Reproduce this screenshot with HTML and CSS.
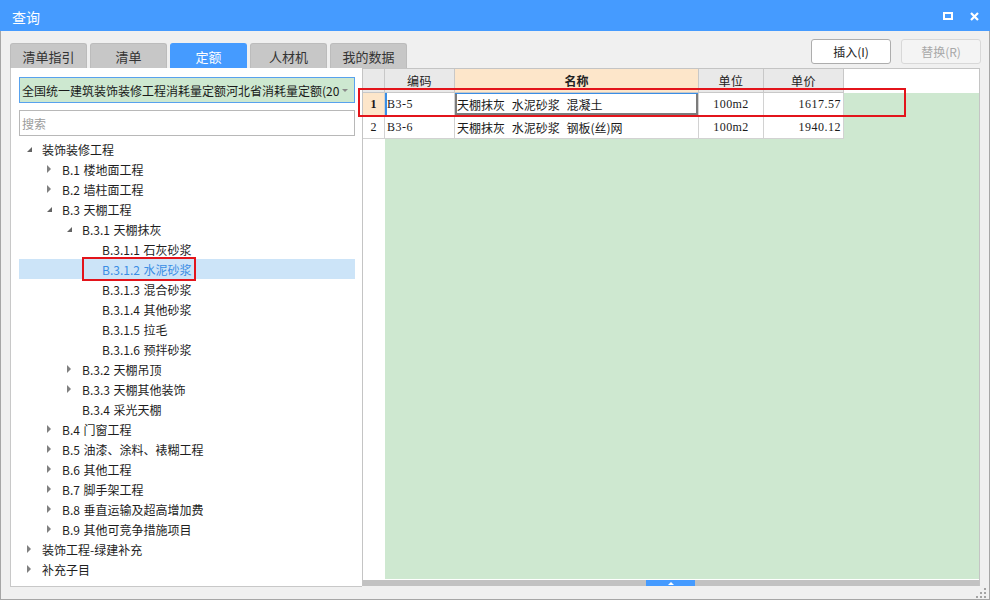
FILE: index.html
```html
<!DOCTYPE html>
<html lang="zh-CN">
<head>
<meta charset="utf-8">
<title>查询</title>
<link rel="stylesheet" href="styles.css">
</head>
<body>
<div class="window">
  <div class="titlebar">
    <span class="title">查询</span>
    <div class="wctrl">
      <svg class="ico-max" width="10" height="8" viewBox="0 0 10 8"><rect x="1" y="1" width="8" height="6" fill="none" stroke="#fff" stroke-width="2"/></svg>
      <svg class="ico-close" width="9" height="9" viewBox="0 0 9 9"><path d="M1 1 L8 8 M8 1 L1 8" stroke="#fff" stroke-width="2.2"/></svg>
    </div>
  </div>
  <div class="body">
    <div class="topbar">
      <div class="tabs">
        <div class="tab">清单指引</div>
        <div class="tab">清单</div>
        <div class="tab active">定额</div>
        <div class="tab">人材机</div>
        <div class="tab">我的数据</div>
      </div>
      <div class="buttons">
        <button class="btn">插入(I)</button>
        <button class="btn disabled">替换(R)</button>
      </div>
    </div>
    <div class="main">
      <div class="left">
        <div class="combo">
          <span class="combo-text">全国统一建筑装饰装修工程消耗量定额河北省消耗量定额(20</span>
          <span class="combo-arrow"></span>
        </div>
        <div class="search">搜索</div>
        <ul class="tree">
          <li class="l0"><span class="tg e"></span>装饰装修工程</li>
          <li class="l1"><span class="tg c"></span>B.1 楼地面工程</li>
          <li class="l1"><span class="tg c"></span>B.2 墙柱面工程</li>
          <li class="l1"><span class="tg e"></span>B.3 天棚工程</li>
          <li class="l2"><span class="tg e"></span>B.3.1 天棚抹灰</li>
          <li class="l3"><span class="tg"></span>B.3.1.1 石灰砂浆</li>
          <li class="l3 sel"><span class="tg"></span>B.3.1.2 水泥砂浆</li>
          <li class="l3"><span class="tg"></span>B.3.1.3 混合砂浆</li>
          <li class="l3"><span class="tg"></span>B.3.1.4 其他砂浆</li>
          <li class="l3"><span class="tg"></span>B.3.1.5 拉毛</li>
          <li class="l3"><span class="tg"></span>B.3.1.6 预拌砂浆</li>
          <li class="l2"><span class="tg c"></span>B.3.2 天棚吊顶</li>
          <li class="l2"><span class="tg c"></span>B.3.3 天棚其他装饰</li>
          <li class="l2"><span class="tg"></span>B.3.4 采光天棚</li>
          <li class="l1"><span class="tg c"></span>B.4 门窗工程</li>
          <li class="l1"><span class="tg c"></span>B.5 油漆、涂料、裱糊工程</li>
          <li class="l1"><span class="tg c"></span>B.6 其他工程</li>
          <li class="l1"><span class="tg c"></span>B.7 脚手架工程</li>
          <li class="l1"><span class="tg c"></span>B.8 垂直运输及超高增加费</li>
          <li class="l1"><span class="tg c"></span>B.9 其他可竞争措施项目</li>
          <li class="l0"><span class="tg c"></span>装饰工程-绿建补充</li>
          <li class="l0"><span class="tg c"></span>补充子目</li>
        </ul>
      </div>
      <div class="grid">
        <div class="grow ghead">
          <div class="cell c-rn"></div>
          <div class="cell c-code">编码</div>
          <div class="cell c-name">名称</div>
          <div class="cell c-unit">单位</div>
          <div class="cell c-price">单价</div>
          <div class="hfill"></div>
        </div>
        <div class="grow">
          <div class="cell c-rn cur">1</div>
          <div class="cell c-code active">B3-5</div>
          <div class="cell c-name editing">天棚抹灰 水泥砂浆 混凝土</div>
          <div class="cell c-unit">100m2</div>
          <div class="cell c-price">1617.57</div>
          <div class="fill"></div>
        </div>
        <div class="grow">
          <div class="cell c-rn">2</div>
          <div class="cell c-code">B3-6</div>
          <div class="cell c-name">天棚抹灰 水泥砂浆 钢板(丝)网</div>
          <div class="cell c-unit">100m2</div>
          <div class="cell c-price">1940.12</div>
          <div class="fill"></div>
        </div>
        <div class="grid-rest">
          <div class="rn-fill"></div>
          <div class="green-fill"></div>
        </div>
        <div class="hscroll"><div class="thumb"><span class="thumb-arrow"></span></div></div>
      </div>
    </div>
    <div class="statusbar">
      <svg class="grip" width="12" height="11" viewBox="0 0 12 11">
        <rect x="9" y="0" width="2" height="2" fill="#a4a4a4"/>
        <rect x="5" y="4" width="2" height="2" fill="#a4a4a4"/>
        <rect x="9" y="4" width="2" height="2" fill="#a4a4a4"/>
        <rect x="1" y="8" width="2" height="2" fill="#a4a4a4"/>
        <rect x="5" y="8" width="2" height="2" fill="#a4a4a4"/>
        <rect x="9" y="8" width="2" height="2" fill="#a4a4a4"/>
      </svg>
    </div>
  </div>
  <div class="mark mark-tree"></div>
  <div class="mark mark-row"></div>
</div>
</body>
</html>
```

FILE: styles.css
```css
html, body {
  margin: 0;
  padding: 0;
  background: #ffffff;
}

.window {
  position: relative;
  width: 990px;
  height: 600px;
  display: flex;
  flex-direction: column;
  font-family: "Noto Sans CJK SC", "Noto Sans", sans-serif;
  color: #1e1e1e;
}

.titlebar {
  flex: none;
  height: 31px;
  background: #459bff;
  display: flex;
  align-items: center;
  padding: 0 11px 0 12px;
  color: #ffffff;
}

.title {
  font-size: 14px;
  padding-top: 3px;
}

.wctrl {
  margin-left: auto;
  display: flex;
  align-items: center;
  gap: 17px;
  padding-top: 1px;
}

.body {
  flex: 1;
  display: flex;
  flex-direction: column;
  background: #f0f0f0;
  border: 1px solid #a6a6a6;
  border-top: none;
}

.topbar {
  flex: none;
  height: 37px;
  display: flex;
  padding: 0 8px 0 9px;
}

.tabs {
  display: flex;
  gap: 3px;
  align-self: flex-end;
}

.tab {
  width: 77px;
  height: 25px;
  box-sizing: border-box;
  background: #c7c7c7;
  border: 1px solid #bcbcbc;
  border-bottom: none;
  border-radius: 3px 3px 0 0;
  font-size: 13px;
  color: #333333;
  display: flex;
  align-items: center;
  justify-content: center;
}

.tab.active {
  background: #459bff;
  border-color: #459bff;
  color: #ffffff;
}

.buttons {
  margin-left: auto;
  display: flex;
  gap: 10px;
  padding-top: 8px;
}

.btn {
  width: 80px;
  height: 25px;
  box-sizing: border-box;
  border: 1px solid #adadad;
  border-radius: 3px;
  background: #ffffff;
  font-family: "Noto Sans CJK SC", "Noto Sans", sans-serif;
  font-size: 12px;
  color: #222222;
  padding: 0;
}

.btn.disabled {
  border-color: #d8d8d8;
  color: #a8a8a8;
  background: #f4f4f4;
}

.main {
  flex: none;
  height: 519px;
  display: flex;
  align-items: flex-start;
  padding-left: 9px;
}

.left {
  width: 352px;
  height: 519px;
  box-sizing: border-box;
  background: #ffffff;
  border-left: 1px solid #c8c8c8;
  border-bottom: 1px solid #c8c8c8;
  padding: 9px 7px 0 8px;
}

.combo {
  height: 26px;
  box-sizing: border-box;
  border: 1px solid #58a2ee;
  background: #cde8d0;
  display: flex;
  align-items: center;
  padding: 0 6px 0 2px;
}

.combo-text {
  white-space: nowrap;
  font-size: 12px;
  color: #1a1a1a;
}

.combo-arrow {
  margin-left: auto;
  width: 0;
  height: 0;
  border-top: 3px solid #8a8a8a;
  border-left: 3px solid transparent;
  border-right: 3px solid transparent;
}

.search {
  margin-top: 7px;
  height: 26px;
  box-sizing: border-box;
  border: 1px solid #b8b8b8;
  display: flex;
  align-items: center;
  padding-left: 2px;
  font-size: 12px;
  color: #9c9c9c;
}

.tree {
  list-style: none;
  margin: 3px 0 0;
  padding: 0;
}

.tree li {
  height: 20px;
  display: flex;
  align-items: center;
  font-size: 12px;
  color: #1e1e1e;
  white-space: nowrap;
  word-spacing: 1px;
}

.tree li.l0 { padding-left: 8px; }
.tree li.l1 { padding-left: 28px; }
.tree li.l2 { padding-left: 48px; }
.tree li.l3 { padding-left: 68px; }

.tree li.sel {
  background: #cce4f8;
  color: #3a8de4;
}

.tg {
  flex: none;
  width: 15px;
  height: 20px;
  display: flex;
  align-items: center;
}

.tg.c::before {
  content: "";
  width: 0;
  height: 0;
  border-left: 4px solid #808080;
  border-top: 4px solid transparent;
  border-bottom: 4px solid transparent;
}

.tg.e::before {
  content: "";
  width: 0;
  height: 0;
  margin-top: 1px;
  border-bottom: 5px solid #646464;
  border-left: 5px solid transparent;
}

.grid {
  width: 618px;
  height: 518px;
  box-sizing: border-box;
  border: 1px solid #c4c4c4;
  border-bottom: none;
  background: #ffffff;
  display: flex;
  flex-direction: column;
  font-family: "Liberation Serif", "Noto Sans CJK SC", serif;
  font-size: 12px;
  color: #1a1a1a;
}

.grow {
  flex: none;
  display: flex;
  height: 23px;
}

.ghead {
  height: 24px;
}

.cell {
  box-sizing: border-box;
  border-right: 1px solid #d2d2d2;
  border-bottom: 1px solid #d2d2d2;
  display: flex;
  align-items: center;
  padding: 0 2px;
  white-space: nowrap;
  overflow: hidden;
}

.c-rn { width: 22px; justify-content: center; }
.c-code { width: 70px; letter-spacing: 0.5px; }
.c-name { width: 244px; font-family: "Noto Sans CJK SC", sans-serif; word-spacing: 4px; }
.c-unit { width: 65px; justify-content: center; letter-spacing: 0.4px; }
.c-price { width: 80px; justify-content: flex-end; letter-spacing: 0.5px; }

.ghead .cell {
  background: #e9e9e9;
  border-color: #c8c8c8;
  justify-content: center;
  font-family: "Noto Sans CJK SC", sans-serif;
  color: #222222;
}

.ghead .c-name {
  background: #fde6ca;
  font-weight: bold;
}

.hfill {
  flex: 1;
  background: #ffffff;
}

.fill {
  flex: 1;
  background: #cee8d0;
}

.c-rn.cur {
  background: #fde6ca;
  font-weight: bold;
}

.c-code.active {
  box-shadow: inset 2px 0 0 #3a8ee6;
}

.c-name.editing {
  box-shadow: inset 0 1px 0 #3a8ee6, inset 2px 0 0 #7c7c7c, inset -2px 0 0 #7c7c7c, inset 0 -2px 0 #7c7c7c;
}

.grid-rest {
  flex: 1;
  display: flex;
}

.rn-fill {
  width: 22px;
  background: #ffffff;
}

.green-fill {
  flex: 1;
  background: #cee8d0;
  margin-bottom: 1px;
}

.hscroll {
  flex: none;
  height: 6px;
  background: #c2c2c2;
  display: flex;
}

.thumb {
  margin-left: 283px;
  width: 49px;
  height: 6px;
  background: #459bff;
  display: flex;
  justify-content: center;
  align-items: center;
}

.thumb-arrow {
  width: 0;
  height: 0;
  border-bottom: 3px solid #ffffff;
  border-left: 3px solid transparent;
  border-right: 3px solid transparent;
}

.statusbar {
  flex: 1;
  display: flex;
  justify-content: flex-end;
  align-items: flex-end;
  padding-right: 2px;
}

.grip {
  display: block;
}

.mark {
  position: absolute;
  box-sizing: border-box;
  border: 2px solid #e3141b;
  pointer-events: none;
}

.mark-tree {
  left: 82px;
  top: 257px;
  width: 114px;
  height: 24px;
}

.mark-row {
  left: 358px;
  top: 88px;
  width: 548px;
  height: 29px;
}
```
